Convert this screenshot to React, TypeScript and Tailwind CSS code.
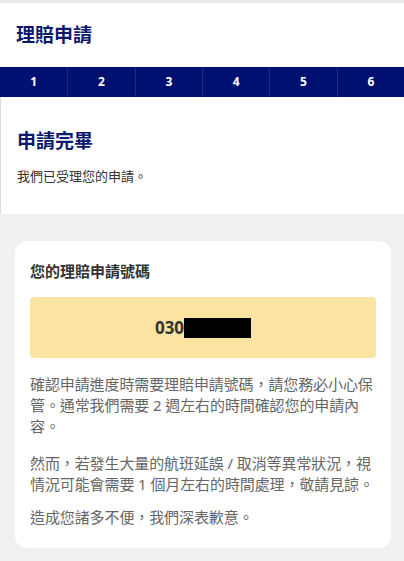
import React from "react";

export default function App() {
  const steps = ["1", "2", "3", "4", "5", "6"];
  return (
    <div
      className="w-[404px] min-h-[561px] bg-[#f0f0f0]"
      style={{ fontFamily: '"Noto Sans", "Noto Sans CJK TC", sans-serif' }}
    >
      <div className="h-[3px] bg-[#e8e8ee]" />
      <div className="h-[64px] bg-white flex items-center px-4">
        <h1 className="text-[19px] font-bold text-[#0b1a6e] leading-none">理賠申請</h1>
      </div>
      <div className="h-[30px] bg-[#001070] grid grid-cols-6">
        {steps.map((s, i) => (
          <div
            key={s}
            className={`flex items-center justify-center text-white text-[12px] font-bold ${
              i > 0 ? "border-l border-[#1c2a80]" : ""
            }`}
          >
            {s}
          </div>
        ))}
      </div>
      <div className="bg-white border-l border-[#dcdcdc] px-4 pt-[30px] pb-[28px]">
        <h2 className="text-[19px] font-bold text-[#0b1a6e] leading-[28px]">申請完畢</h2>
        <p className="mt-[11px] text-[13px] text-[#333] leading-[20px]">我們已受理您的申請。</p>
      </div>
      <div className="pl-[15px] pr-[13px] pt-[27px] pb-[13px]">
        <div className="bg-white rounded-[12px] pl-[15px] pr-[15px] pt-[19px] pb-[20px]">
          <h3 className="text-[15px] font-bold text-[#333] leading-[22px]">您的理賠申請號碼</h3>
          <div className="mt-[15px] h-[61px] bg-[#fbe3a2] rounded-[4px] flex items-center justify-center">
            <span className="text-[17px] font-bold text-[#333]">030</span>
            <span className="inline-block w-[67px] h-[20px] bg-black" />
          </div>
          <div className="mt-[16px] text-[15px] text-[#666] leading-[21px] tracking-[-0.1px]">
            <p>確認申請進度時需要理賠申請號碼，請您務必小心保管。通常我們需要 2 週左右的時間確認您的申請內容。</p>
            <p className="mt-[16px]">然而，若發生大量的航班延誤 / 取消等異常狀況，視情況可能會需要 1 個月左右的時間處理，敬請見諒。</p>
            <p className="mt-[12px]">造成您諸多不便，我們深表歉意。</p>
          </div>
        </div>
      </div>
    </div>
  );
}
